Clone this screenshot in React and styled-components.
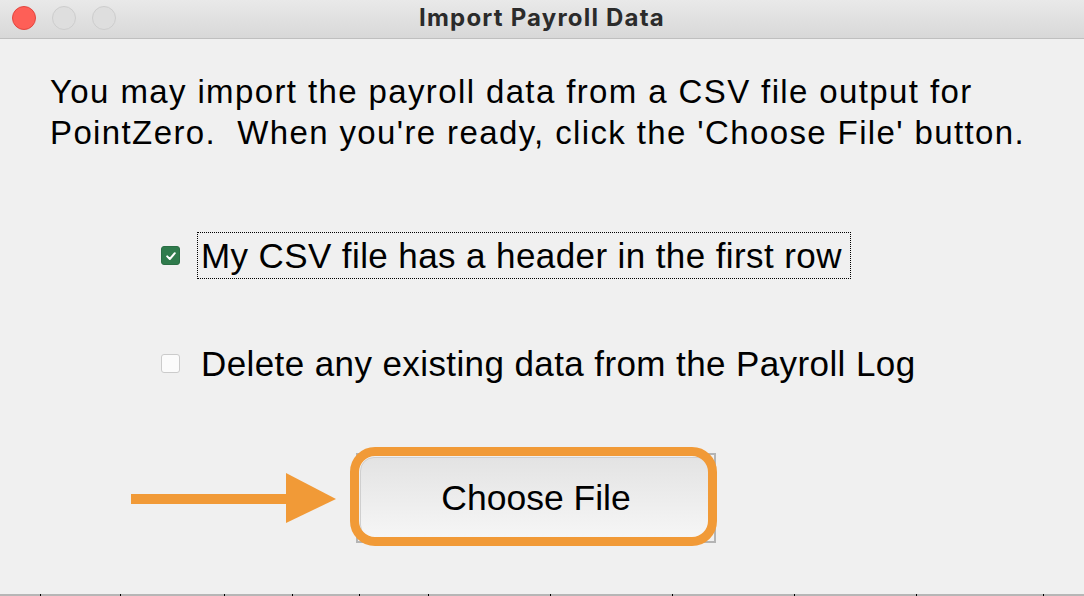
import React from "react";
import styled, { createGlobalStyle } from "styled-components";

const Global = createGlobalStyle`
  html, body { margin: 0; padding: 0; background: #efefef; }
  * { box-sizing: border-box; }
`;

const Window = styled.div`
  width: 1084px;
  height: 596px;
  display: flex;
  flex-direction: column;
  background: #f0f0f0;
  font-family: "Liberation Sans", Arial, sans-serif;
  color: #000;
  overflow: hidden;
`;

const TitleBar = styled.div`
  height: 39px;
  flex: none;
  display: grid;
  grid-template-columns: 1fr auto 1fr;
  align-items: center;
  background: linear-gradient(#e9e9e9, #d8d8d8);
  border-bottom: 1px solid #bfbfbf;
  padding: 0 0 0 12px;
`;

const Lights = styled.div`
  display: flex;
  gap: 16px;
  align-items: center;
  margin-top: -3px;
`;

const Light = styled.span`
  width: 24px;
  height: 24px;
  border-radius: 50%;
  background: ${(p) => (p.$close ? "#fe5f57" : "#dedede")};
  border: 1px solid ${(p) => (p.$close ? "#e2463f" : "#cdcdcd")};
`;

const Title = styled.div`
  font-family: Inter, "Liberation Sans", sans-serif;
  font-weight: 700;
  font-size: 24px;
  color: #2b2b2b;
  letter-spacing: 1.2px;
  margin-top: -3px;
  margin-left: -12px;
`;

const Body = styled.div`
  flex: 1;
  display: flex;
  flex-direction: column;
`;

const Intro = styled.p`
  margin: 32px 0 0 50px;
  font-size: 33px;
  line-height: 41px;
  letter-spacing: 1.38px;
`;

const Options = styled.div`
  display: flex;
  flex-direction: column;
  gap: 61px;
  margin: 79px 0 0 161px;
`;

const OptionRow = styled.label`
  display: flex;
  align-items: center;
  gap: 17px;
`;

const Box = styled.span`
  width: 19px;
  height: 19px;
  border-radius: 3px;
  display: flex;
  align-items: center;
  justify-content: center;
  background: ${(p) => (p.$checked ? "#2f7b4c" : "#fbfbfb")};
  border: 1px solid ${(p) => (p.$checked ? "#2a6e44" : "#cbcbcb")};
`;

const OptionText = styled.span`
  font-size: 35px;
  line-height: 45px;
  padding: 0 8px 0 3px;
  letter-spacing: 0.4px;
  border: 1px dotted ${(p) => (p.$focused ? "#000" : "transparent")};
`;

const ButtonRow = styled.div`
  display: flex;
  align-items: center;
  gap: 20px;
  margin: 66px 0 0 131px;
`;

const ButtonFrame = styled.div`
  position: relative;
  width: 360px;
  height: 90px;
  border: 2px solid #b4b4b4;
  padding: 2px;
`;

const AquaButton = styled.button`
  width: 100%;
  height: 100%;
  border: 1px solid #cfcfcf;
  border-radius: 14px;
  background: linear-gradient(#e3e3e3, #f6f6f6);
  font-family: "Liberation Sans", Arial, sans-serif;
  font-size: 35.5px;
  color: #000;
  padding: 0;
`;

const Highlight = styled.div`
  position: absolute;
  left: -8px;
  top: -8px;
  right: -3px;
  bottom: -5px;
  border: 9px solid #f19a37;
  border-radius: 25px;
  pointer-events: none;
`;

const HeaderStrip = styled.div`
  flex: none;
  height: 2px;
  display: flex;
  margin-top: auto;
  background: #b6b6b6;
`;

const HeaderCell = styled.div`
  flex: none;
  height: 2px;
  border-right: 1px solid #000;
  &:last-child { border-right: none; flex: 1; }
`;

const cellWidths = [41, 80, 104, 68, 67, 69, 122, 122, 122, 122, 127, 40];

function Arrow() {
  return (
    <svg width="205" height="50" viewBox="0 0 205 50">
      <rect x="0" y="21" width="160" height="10" fill="#f19a37" />
      <polygon points="155,0 205,26 155,50" fill="#f19a37" />
    </svg>
  );
}

function Check() {
  return (
    <svg width="12" height="12" viewBox="0 0 12 12">
      <path d="M2.2 6.4 L4.8 9 L9.8 3.2" fill="none" stroke="#fff" strokeWidth="2" strokeLinecap="round" strokeLinejoin="round" />
    </svg>
  );
}

export default function App() {
  return (
    <>
      <Global />
      <Window>
        <TitleBar>
          <Lights>
            <Light $close />
            <Light />
            <Light />
          </Lights>
          <Title>Import Payroll Data</Title>
          <div />
        </TitleBar>
        <Body>
          <Intro>
            You may import the payroll data from a CSV file output for
            <br />
            PointZero.&nbsp; When you're ready, click the 'Choose File' button.
          </Intro>
          <Options>
            <OptionRow>
              <Box $checked>
                <Check />
              </Box>
              <OptionText $focused>My CSV file has a header in the first row</OptionText>
            </OptionRow>
            <OptionRow>
              <Box />
              <OptionText>Delete any existing data from the Payroll Log</OptionText>
            </OptionRow>
          </Options>
          <ButtonRow>
            <Arrow />
            <ButtonFrame>
              <AquaButton>Choose File</AquaButton>
              <Highlight />
            </ButtonFrame>
          </ButtonRow>
          <HeaderStrip>
            {cellWidths.map((w, i) => (
              <HeaderCell key={i} style={{ width: w }} />
            ))}
          </HeaderStrip>
        </Body>
      </Window>
    </>
  );
}
